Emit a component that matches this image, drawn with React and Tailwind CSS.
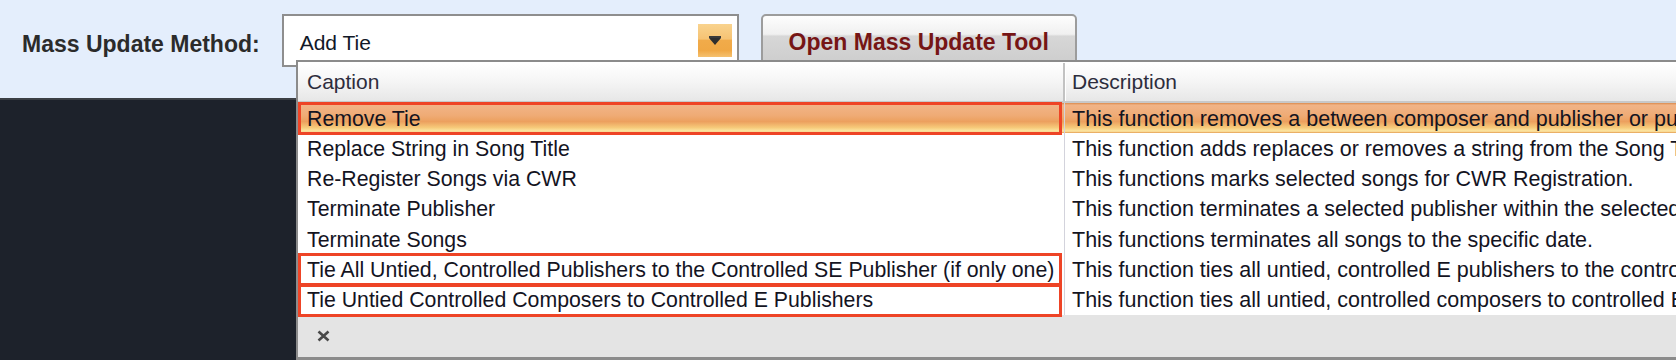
import React from "react";

const rows = [
  {
    caption: "Remove Tie",
    desc: "This function removes a between composer and publisher or publisher and publisher.",
    selected: true,
    marked: true,
  },
  {
    caption: "Replace String in Song Title",
    desc: "This function adds replaces or removes a string from the Song Title.",
  },
  {
    caption: "Re-Register Songs via CWR",
    desc: "This functions marks selected songs for CWR Registration.",
  },
  {
    caption: "Terminate Publisher",
    desc: "This function terminates a selected publisher within the selected songs.",
  },
  {
    caption: "Terminate Songs",
    desc: "This functions terminates all songs to the specific date.",
  },
  {
    caption: "Tie All Untied, Controlled Publishers to the Controlled SE Publisher (if only one)",
    desc: "This function ties all untied, controlled E publishers to the controlled SE publisher.",
    marked: true,
  },
  {
    caption: "Tie Untied Controlled Composers to Controlled E Publishers",
    desc: "This function ties all untied, controlled composers to controlled E publishers.",
    marked: true,
  },
];

export default function App() {
  return (
    <div
      className="relative w-[1676px] h-[360px] overflow-hidden bg-[#1d222b]"
      style={{ fontFamily: '"Liberation Sans", Arial, sans-serif' }}
    >
      {/* top toolbar */}
      <div className="h-[98px] bg-[#e4eefc] flex items-start pl-[22px] gap-[22px]">
        <div className="mt-[30px] text-[23px] leading-[28px] font-bold text-[#2b2b2b] whitespace-nowrap">
          Mass Update Method:
        </div>
        <div className="mt-[14px] w-[457px] h-[53px] border-2 border-[#8e8e8e] bg-white flex items-start">
          <span className="pl-[16px] pt-[14px] text-[21px] leading-[26px] text-[#111827]">Add Tie</span>
          <div className="ml-auto mt-[8px] mr-[5px] w-[34px] h-[33px] bg-[linear-gradient(to_bottom,#f9d38e_0%,#f6c374_45%,#f1ab4a_50%,#f0a845_80%,#f5c170_100%)] flex items-center justify-center">
            <svg width="14" height="10" viewBox="0 0 14 10">
              <rect x="1" y="0" width="12" height="2" fill="#3a3a3a" />
              <polygon points="1,2 13,2 7,9" fill="#2e2e2e" />
            </svg>
          </div>
        </div>
        <div className="mt-[14px] w-[316px] h-[52px] border-2 border-[#9c9c9c] rounded-t-[5px] bg-[linear-gradient(to_bottom,#fdfdfd_0%,#f0f0f0_38%,#d7d7d7_42%,#cdcdcd_100%)] flex justify-center">
          <span className="pt-[12px] text-[23px] leading-[28px] font-bold text-[#761515] whitespace-nowrap">
            Open Mass Update Tool
          </span>
        </div>
      </div>
      {/* dark workspace */}
      <div className="h-[262px] border-t-2 border-[#3b3f45] bg-[#1d222b]" />

      {/* dropdown popup */}
      <div className="absolute left-[296px] top-[60px] w-[1400px] h-[300px] border-2 border-b-[3px] border-[#8b8b8b] bg-white flex flex-col text-[21.3px] text-[#14141f]">
        {/* header */}
        <div className="h-[41px] shrink-0 flex border-b-2 border-[#c8c8c8] border-t border-t-white bg-[linear-gradient(to_bottom,#ffffff_0%,#f6f6f6_45%,#e7e7e7_100%)] text-[#2d2d3d] text-[21px]">
          <div className="w-[767px] shrink-0 pl-[9px] leading-[38px] border-r-2 border-[#c2c2c2]">Caption</div>
          <div className="pl-[6px] leading-[38px] border-l border-white">Description</div>
        </div>
        {/* rows */}
        {rows.map((r, i) => (
          <div
            key={i}
            className={
              r.selected
                ? "h-[30.3px] shrink-0 flex whitespace-nowrap bg-[linear-gradient(to_bottom,#db8a4c_0%,#f1b487_7%,#efab75_42%,#eca05e_62%,#f6ca7a_82%,#fde7a4_94%,#e39a4e_100%)]"
                : "h-[30.3px] shrink-0 flex whitespace-nowrap"
            }
          >
            <div className="relative w-[767px] shrink-0 pl-[9px] pt-[1.5px] leading-[28.8px] border-r border-[#d3d3dc]">
              {r.caption}
              {r.marked && (
                <div className="absolute left-0 right-[2px] -top-[1.5px] -bottom-[2px] border-[3px] border-[#ee4426]" />
              )}
            </div>
            <div className="pl-[7px] pt-[1.5px] leading-[28.8px] overflow-hidden text-[21.5px]">{r.desc}</div>
          </div>
        ))}
        {/* footer */}
        <div className="flex-1 bg-[#e4e4e4] flex items-center pl-[19px]">
          <svg width="13" height="12" viewBox="0 0 13 12">
            <path d="M1.5 1.5 L11.5 10.5 M11.5 1.5 L1.5 10.5" stroke="#4a4a4a" strokeWidth="2.6" fill="none" />
          </svg>
        </div>
      </div>
    </div>
  );
}
